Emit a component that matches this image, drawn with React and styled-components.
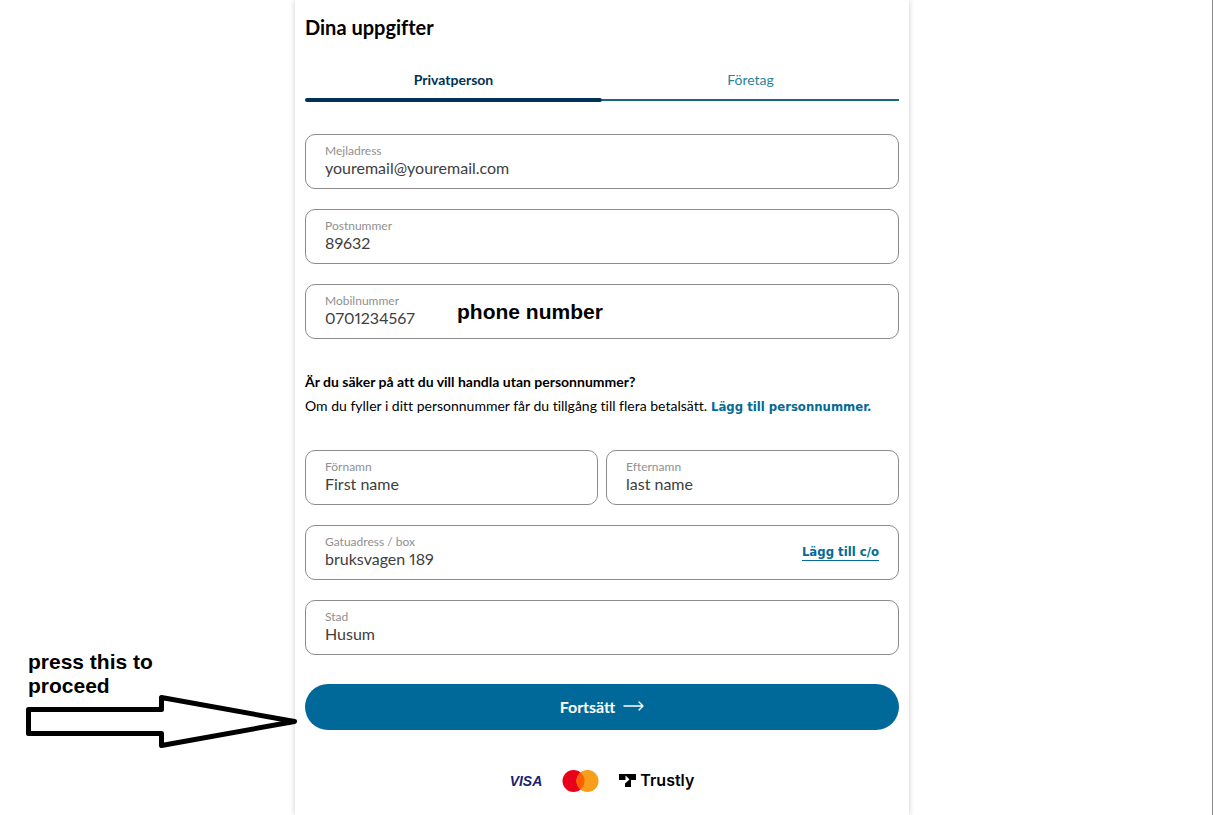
import { useState } from 'react';
import styled, { createGlobalStyle } from 'styled-components';

const GlobalStyle = createGlobalStyle`
  * {
    box-sizing: border-box;
  }

  body {
    margin: 0;
    background: #fff;
    color: #000;
    font-family: Lato, 'Open Sans', sans-serif;
    font-variant-ligatures: none;
    font-variant-numeric: proportional-nums;
  }
`;

const Page = styled.div`
  display: grid;
  grid-template-columns: 1fr minmax(0, 614px) 1fr;
  min-height: 100vh;
  padding-right: 8px;
  border-right: 1px solid #8a8a8a;
`;

const Panel = styled.main`
  grid-column: 2;
  padding: 15px 10px 20px;
  background: #fff;
  box-shadow: 0 0 6px rgba(0, 0, 0, 0.2);
`;

const Title = styled.h1`
  margin: 0 0 29px;
  font-size: 20px;
  line-height: 24px;
  font-weight: 700;
`;

const Tabs = styled.div`
  display: flex;
  margin-bottom: 32px;
`;

const Tab = styled.button`
  flex: 1;
  display: flex;
  flex-direction: column;
  align-items: stretch;
  height: 34px;
  padding: 0;
  border: none;
  background: none;
  color: ${(props) => (props.$active ? '#003157' : '#2b829b')};
  font-family: inherit;
  font-size: 14px;
  line-height: 24px;
  font-weight: ${(props) => (props.$active ? 700 : 400)};
  cursor: pointer;

  &::after {
    content: '';
    height: ${(props) => (props.$active ? '4px' : '2px')};
    margin: ${(props) => (props.$active ? '6px' : '7px')} 0 0;
    border-radius: ${(props) => (props.$active ? '2px' : '0')};
    background: ${(props) => (props.$active ? '#003157' : '#17677c')};
  }
`;

const Fields = styled.div`
  display: grid;
  grid-template-columns: 1fr 1fr;
  gap: 20px 8px;
`;

const FieldBox = styled.div`
  position: relative;
  grid-column: ${(props) => (props.$half ? 'auto' : '1 / -1')};
  display: flex;
  align-items: center;
  height: 55px;
  padding: 0 19px;
  border: 1px solid #8c8c8c;
  border-radius: 10px;
`;

const FieldText = styled.div`
  flex: 1;
  min-width: 0;
  display: flex;
  flex-direction: column;
  padding-bottom: 3px;
`;

const Label = styled.label`
  color: #909090;
  font-size: 12px;
  line-height: 16px;
`;

const Input = styled.input`
  width: 100%;
  height: 18px;
  padding: 0;
  border: none;
  outline: none;
  background: none;
  color: #3e3e3e;
  font-family: inherit;
  font-variant: inherit;
  font-size: 16px;
  line-height: 18px;
`;

const TextLink = styled.a`
  color: #046a96;
  font-family: 'DejaVu Sans Condensed', 'DejaVu Sans', sans-serif;
  font-size: 13px;
  line-height: 16px;
  font-weight: 700;
  text-decoration: none;
  border-bottom: ${(props) => (props.$underline ? '1px solid #046a96' : 'none')};
`;

const Notice = styled.div`
  margin: 31px 0 32px;
  font-size: 14px;
  line-height: 24px;
`;

const NoticeTitle = styled.h2`
  margin: 0;
  font-size: 14px;
  line-height: 24px;
  font-weight: 700;
`;

const NoticeText = styled.p`
  display: flex;
  align-items: baseline;
  gap: 4px;
  margin: 0;
`;

const ButtonRow = styled.div`
  position: relative;
  margin-top: 29px;
`;

const SubmitButton = styled.button`
  display: flex;
  align-items: center;
  justify-content: center;
  gap: 8px;
  width: 100%;
  height: 46px;
  padding: 0 0 2px;
  border: none;
  border-radius: 23px;
  background: #006999;
  color: #fff;
  font-family: inherit;
  font-size: 16px;
  font-weight: 700;
  cursor: pointer;
`;

// Notes that lie on top of the form
const Note = styled.p`
  margin: 0;
  font-family: 'Liberation Sans', Arial, sans-serif;
  font-size: 21px;
  line-height: 24px;
  font-weight: 700;
`;

const FieldNote = styled(Note)`
  position: absolute;
  left: 151px;
  top: 15px;
`;

const ArrowNote = styled.div`
  position: absolute;
  right: calc(100% + 8px);
  bottom: -18px;
  width: 271px;

  svg {
    display: block;
    margin-top: -3px;
  }

  ${Note} {
    width: 150px;
    margin-left: 2px;
  }
`;

const Payments = styled.div`
  display: flex;
  align-items: center;
  justify-content: center;
  gap: 20px;
  height: 24px;
  margin-top: 39px;
`;

const Visa = styled.span`
  color: #1a1f71;
  font-family: 'Liberation Sans', Arial, sans-serif;
  font-size: 14px;
  font-style: italic;
  font-weight: 700;
`;

const Trustly = styled.span`
  display: flex;
  align-items: center;
  gap: 4px;
  padding-bottom: 2px;
  font-family: Inter, sans-serif;
  font-size: 16px;
  line-height: 20px;
  font-weight: 600;
`;

function Field({ id, label, value, half, children }) {
  const [text, setText] = useState(value);

  return (
    <FieldBox $half={half}>
      <FieldText>
        <Label htmlFor={id}>{label}</Label>
        <Input id={id} value={text} onChange={(e) => setText(e.target.value)} />
      </FieldText>
      {children}
    </FieldBox>
  );
}

export default function App() {
  const [tab, setTab] = useState('private');

  return (
    <>
      <GlobalStyle />
      <Page>
        <Panel>
          <Title>Dina uppgifter</Title>
          <Tabs role="tablist">
            <Tab role="tab" aria-selected={tab === 'private'} $active={tab === 'private'} onClick={() => setTab('private')}>
              Privatperson
            </Tab>
            <Tab role="tab" aria-selected={tab === 'company'} $active={tab === 'company'} onClick={() => setTab('company')}>
              Företag
            </Tab>
          </Tabs>

          <form onSubmit={(e) => e.preventDefault()}>
            <Fields>
              <Field id="email" label="Mejladress" value="youremail@youremail.com" />
              <Field id="zip" label="Postnummer" value="89632" />
              <Field id="phone" label="Mobilnummer" value="0701234567">
                <FieldNote>phone number</FieldNote>
              </Field>
            </Fields>

            <Notice>
              <NoticeTitle>Är du säker på att du vill handla utan personnummer?</NoticeTitle>
              <NoticeText>
                Om du fyller i ditt personnummer får du tillgång till flera betalsätt.
                <TextLink href="#personnummer">Lägg till personnummer.</TextLink>
              </NoticeText>
            </Notice>

            <Fields>
              <Field id="firstName" label="Förnamn" value="First name" half />
              <Field id="lastName" label="Efternamn" value="last name" half />
              <Field id="street" label="Gatuadress / box" value="bruksvagen 189">
                <TextLink href="#co" $underline>Lägg till c/o</TextLink>
              </Field>
              <Field id="city" label="Stad" value="Husum" />
            </Fields>

            <ButtonRow>
              <SubmitButton type="submit">
                Fortsätt
                <svg width="21" height="10" viewBox="0 0 21 10" fill="none" stroke="#fff" strokeWidth="1.4" strokeLinecap="round" strokeLinejoin="round">
                  <path d="M1 5H20M16 1L20 5L16 9" />
                </svg>
              </SubmitButton>
              <ArrowNote>
                <Note>press this to proceed</Note>
                <svg width="271" height="53" viewBox="0 0 271 53" fill="none" stroke="#000" strokeWidth="5" strokeLinejoin="round">
                  <path d="M2.5 14.5H135.5V2.5L268.5 26.5L135.5 50.5V38.5H2.5Z" />
                </svg>
              </ArrowNote>
            </ButtonRow>

            <Payments>
              <Visa>VISA</Visa>
              <svg width="37" height="24" viewBox="0 0 37 24" role="img" aria-label="Mastercard">
                <circle cx="11.5" cy="12" r="11" fill="#eb001b" />
                <circle cx="25.5" cy="12" r="11" fill="#f79e1b" />
                <path d="M18.5 3.5A11 11 0 0 1 18.5 20.5A11 11 0 0 1 18.5 3.5Z" fill="#ff5f00" />
              </svg>
              <Trustly>
                <svg width="17" height="13" viewBox="0 0 17 13" fill="#000">
                  <path d="M0 0H17V6H12V13H6V9.5L10.5 5.5L6.5 1.5V6H0Z" />
                </svg>
                Trustly
              </Trustly>
            </Payments>
          </form>
        </Panel>
      </Page>
    </>
  );
}
